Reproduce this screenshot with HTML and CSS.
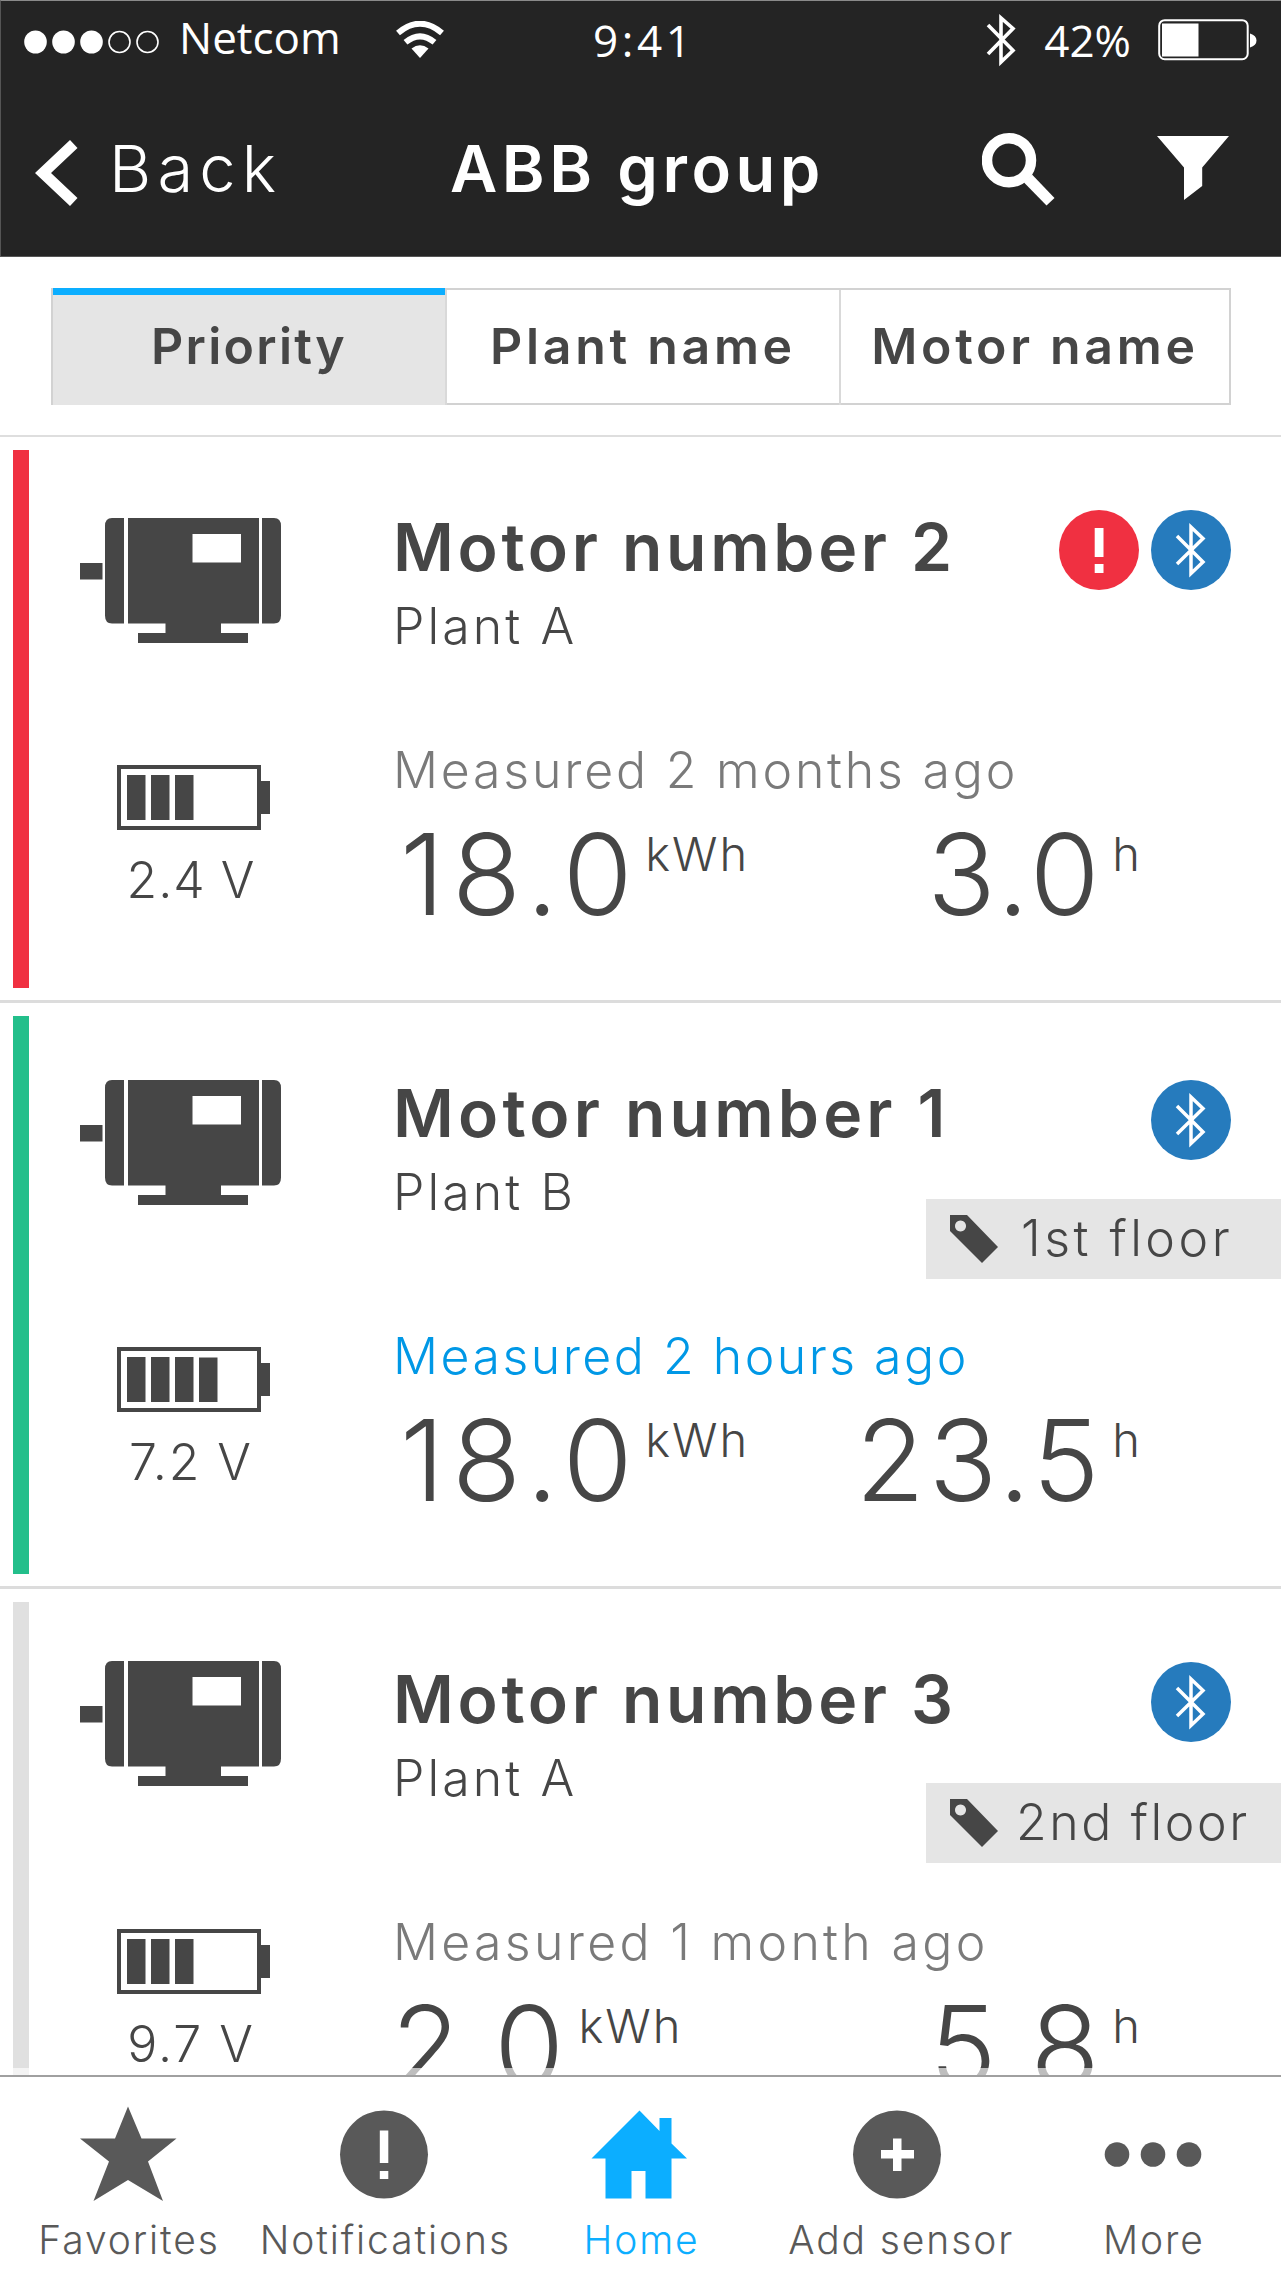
FILE: index.html
```
<!DOCTYPE html>
<html lang="en">
<head>
<meta charset="utf-8">
<title>ABB group</title>
<link rel="stylesheet" href="styles.css">
</head>
<body>
<svg class="sprite" aria-hidden="true">
  <symbol id="motor" viewBox="0 0 201 125">
    <path d="M0 45h22.500v16.500H0zM44 0v105.500H32q-7 0-7-8V8q0-8 7-8zM48 0h131v105.500H141V115h27v10H58v-10h27.500v-9.500H48zM112.500 16v28.500H161V16zM182 0h12q7 0 7 8v89.500q0 8-7 8h-12z" fill="#464646" fill-rule="evenodd"/>
  </symbol>
  <symbol id="cell" viewBox="0 0 153 65">
    <path d="M0 0h144v16h9v33h-9v16H0zM4 4v57h136V4z" fill="#464646" fill-rule="evenodd"/>
    <path d="M10 10h18.500v45H10zM34 10h18.500v45H34zM58 10h18.500v45H58z" fill="#464646"/>
  </symbol>
  <symbol id="bluetooth" viewBox="0 0 80 80">
    <circle cx="40" cy="40" r="40" fill="#267bbd"/>
    <path d="M26 26L52 52 40 63.500V17L52 28.500 26 54" fill="none" stroke="#fff" stroke-width="3.500"/>
  </symbol>
  <symbol id="tag" viewBox="0 0 48 48">
    <path d="M0 0h17l31 32-16 16L0 16zM10.500 5.500a5.500 5.500 0 1 0 .01 0z" fill="#464646" fill-rule="evenodd"/>
  </symbol>
</svg>

<header class="header">
  <div class="status">
    <div class="status-left">
      <svg class="signal" viewBox="0 0 135 24"><g fill="#fff"><ellipse cx="11.500" cy="12" rx="11.300" ry="11.500"/><ellipse cx="39.500" cy="12" rx="11.300" ry="11.500"/><ellipse cx="67.500" cy="12" rx="11.300" ry="11.500"/></g><g fill="none" stroke="#fff" stroke-width="1.600"><circle cx="95.500" cy="12" r="10.500"/><circle cx="123.500" cy="12" r="10.500"/></g></svg>
      <span class="carrier">Netcom</span>
      <svg class="wifi" viewBox="0 0 48 38"><path d="M24 37l-8.500-9.500q8.500-6.500 17 0z" fill="#fff"/><g fill="none" stroke="#fff"><path d="M9.500 21.300q14.500-12 29 0" stroke-width="6"/><path d="M2 12q22-18.500 44 0" stroke-width="6"/></g></svg>
    </div>
    <span class="clock">9:41</span>
    <div class="status-right">
      <svg class="bt" viewBox="0 0 30 54"><path d="M2 12L27 37.500 15 49V5L27 15.500 2 41" fill="none" stroke="#fff" stroke-width="3.600"/></svg>
      <span>42%</span>
      <svg class="power" viewBox="0 0 100 42"><rect x="1.200" y="1.200" width="88.500" height="39" rx="5.500" fill="none" stroke="#fff" stroke-width="2"/><path d="M4 4.500h36.500v33H4zM92 14.500q6.500 2 6.500 7t-6.500 7z" fill="#fff"/></svg>
    </div>
  </div>
  <nav class="nav">
    <a class="back"><svg viewBox="0 0 43 66"><path d="M35 0l7.500 8-26.500 25 26.500 25-7.500 8L0 33z" fill="#fff"/></svg>Back</a>
    <h1 class="title">ABB group</h1>
    <div class="nav-icons">
      <svg class="search" viewBox="0 0 73 73"><circle cx="27" cy="27.300" r="22" fill="none" stroke="#fff" stroke-width="10.500"/><path d="M42 49.500l8-8L72.500 65l-8 7.500z" fill="#fff"/></svg>
      <svg class="filter" viewBox="0 0 72 64"><path d="M0 0h72L45.200 31.500V50L27 64V31.500z" fill="#fff"/></svg>
    </div>
  </nav>
</header>

<div class="tabs">
  <div class="tab tab-active">Priority</div>
  <div class="tab">Plant name</div>
  <div class="tab">Motor name</div>
</div>

<main class="list">
  <article class="card">
    <div class="bar bar-red"></div>
    <div class="side">
      <svg class="motor motor-low"><use href="#motor"/></svg>
      <svg class="cell" viewBox="0 0 153 65"><use href="#cell"/></svg>
      <span class="volts">2.4 V</span>
    </div>
    <div class="main">
      <div class="head head-short">
        <div class="heading"><h2 class="name">Motor number 2</h2><p class="plant">Plant A</p></div>
        <div class="aside aside-high"><div class="badges">
          <svg viewBox="0 0 80 80"><circle cx="40" cy="40" r="40" fill="#f03041"/><path d="M35.700 18h8.800v29h-8.800zM35.700 54h8.800v9h-8.800z" fill="#fff"/></svg>
          <svg><use href="#bluetooth"/></svg>
        </div></div>
      </div>
      <p class="measured">Measured 2 months ago</p>
      <div class="values">
        <div class="value"><span class="num num-wide">18.0</span><span class="unit">kWh</span></div>
        <div class="value"><span class="num">3.0</span><span class="unit">h</span></div>
      </div>
    </div>
  </article>

  <article class="card card-tall">
    <div class="bar bar-green"></div>
    <div class="side">
      <svg class="motor motor-mid"><use href="#motor"/></svg>
      <svg class="cell" viewBox="0 0 153 65"><use href="#cell"/><path d="M82 10.500h18.500V55H82z" fill="#464646"/></svg>
      <span class="volts volts-wide">7.2 V</span>
    </div>
    <div class="main">
      <div class="head">
        <div class="heading"><h2 class="name name-wide">Motor number 1</h2><p class="plant">Plant B</p></div>
        <div class="aside">
          <div class="badges"><svg><use href="#bluetooth"/></svg></div>
          <div class="tag"><svg><use href="#tag"/></svg><span>1st floor</span></div>
        </div>
      </div>
      <p class="measured measured-new">Measured 2 hours ago</p>
      <div class="values">
        <div class="value"><span class="num num-wide">18.0</span><span class="unit">kWh</span></div>
        <div class="value"><span class="num">23.5</span><span class="unit">h</span></div>
      </div>
    </div>
  </article>

  <article class="card card-tall">
    <div class="bar bar-grey"></div>
    <div class="side">
      <svg class="motor"><use href="#motor"/></svg>
      <svg class="cell" viewBox="0 0 153 65"><use href="#cell"/></svg>
      <span class="volts volts-wide">9.7 V</span>
    </div>
    <div class="main">
      <div class="head">
        <div class="heading"><h2 class="name">Motor number 3</h2><p class="plant">Plant A</p></div>
        <div class="aside aside-high">
          <div class="badges"><svg><use href="#bluetooth"/></svg></div>
          <div class="tag"><svg><use href="#tag"/></svg><span class="tag-tight">2nd floor</span></div>
        </div>
      </div>
      <p class="measured measured-wide">Measured 1 month ago</p>
      <div class="values">
        <div class="value"><span class="num num-tight">2.0</span><span class="unit">kWh</span></div>
        <div class="value"><span class="num">5.8</span><span class="unit">h</span></div>
      </div>
    </div>
  </article>
</main>

<footer class="tabbar">
  <a><svg viewBox="0 0 100 100"><path d="M50 2.500l13.500 32h35L70 57.500 85 97 50 76 15.500 97 31 57.500 2 34.500h35z"/></svg><span>Favorites</span></a>
  <a><svg viewBox="0 0 100 100"><circle cx="50" cy="50.500" r="44"/><path class="cut" d="M45.800 26.500h8.500V59h-8.500zM45.800 67h8.500v8h-8.500z"/></svg><span>Notifications</span></a>
  <a class="current"><svg viewBox="0 0 100 100"><path d="M49.500 6.500l20 20.500V14h12v25.500L97 54.500H81.500v40h-26V67h-14v27.500h-26v-40h-14z"/></svg><span>Home</span></a>
  <a><svg viewBox="0 0 100 100"><circle cx="50" cy="50.500" r="44"/><path class="cut" d="M46 34.500h8.500V46H67v8.500H54.500V67H46V54.500H34V46h12z"/></svg><span class="label-shift">Add sensor</span></a>
  <a><svg viewBox="0 0 100 100"><circle cx="14" cy="50.500" r="12.300"/><circle cx="50" cy="50.500" r="12.300"/><circle cx="86" cy="50.500" r="12.300"/></svg><span>More</span></a>
</footer>
</body>
</html>
```

FILE: styles.css
```
* { box-sizing: border-box; }

body {
  margin: 0;
  height: 2273px;
  overflow: hidden;
  display: flex;
  flex-direction: column;
  background: #fff;
  color: #464646;
  font-family: "Inter", sans-serif;
  font-weight: 300;
}

h1, h2, p { margin: 0; }
svg { display: block; flex: none; }
.sprite { width: 0; height: 0; position: absolute; }

/* Header */
.header {
  height: 257px;
  flex: none;
  padding-top: 9px;
  background: #242424;
  border: 1px solid #555;
  border-top-color: #8a8a8a;
  border-right: 0;
  color: #fff;
}

.status {
  display: grid;
  grid-template-columns: 592px 1fr auto;
  height: 60px;
  padding-right: 23px;
  font: 400 44px/60px "Open Sans", sans-serif;
}

.status-left, .status-right { display: flex; align-items: center; }
.status-left { padding-left: 23px; }
.signal { width: 135px; height: 24px; margin-top: 4px; }
.carrier { margin: -6px 55px 0 20px; }
.wifi { width: 48px; height: 38px; }
.clock { letter-spacing: 3.6px; }
.bt { width: 30px; height: 54px; margin-right: 28px; }
.power { width: 100px; height: 42px; margin: 0 0 0 27px; }

.nav {
  display: grid;
  grid-template-columns: 449px 1fr auto;
  height: 80px;
  margin-top: 59px;
  padding-right: 52px;
  line-height: 80px;
  font-size: 65px;
}

.back {
  display: flex;
  align-items: center;
  gap: 31px;
  padding-left: 34px;
  letter-spacing: 6.2px;
}
.back svg { width: 43px; height: 66px; margin-top: 8px; }
.title { font-size: 65px; font-weight: 600; letter-spacing: 4.5px; }
.nav-icons { display: flex; gap: 102px; }
.search { width: 73px; height: 73px; margin-top: 4px; }
.filter { width: 72px; height: 64px; margin-top: 7px; }

/* Sort tabs */
.tabs {
  display: grid;
  grid-template-columns: 392px 394px 1fr;
  flex: none;
  height: 117px;
  margin: 31px 50px 30px 51px;
  border: 2px solid #d2d2d2;
}

.tab {
  line-height: 113px;
  text-align: center;
  font-size: 50px;
  font-weight: 600;
  letter-spacing: 3.7px;
}
.tab + .tab { border-left: 2px solid #d9d9d9; }
.tab-active {
  margin-top: -2px;
  background: #e5e5e5;
  box-shadow: inset 0 7px #0caeff;
  line-height: 117px;
  letter-spacing: 2.3px;
}

/* Motor list */
.list {
  position: relative;
  flex: 1;
  min-height: 0;
  overflow: hidden;
  border-top: 2px solid #dedede;
}
.list::after {
  content: "";
  position: absolute;
  inset: auto 0 0;
  height: 7px;
  background: rgba(255, 255, 255, .65);
}

.card {
  display: grid;
  grid-template-columns: 16px 352px minmax(0, 1fr);
  height: 566px;
  padding-left: 13px;
  border-bottom: 3px solid #dcdcdc;
}
.card-tall { height: 586px; }

.bar { margin: 13px 0 12px; }
.bar-red { background: #f03041; }
.bar-green { background: #23bf8b; }
.bar-grey { background: #e0e0e0; }

.side { display: flex; flex-direction: column; padding-left: 51px; }
.motor { width: 201px; height: 125px; margin: 72px 0 143px; }
.motor-mid { margin: 77px 0 142px; }
.motor-low { margin: 81px 0 122px; }
.cell { width: 153px; height: 65px; margin-left: 37px; }
.volts {
  width: 222px;
  margin-top: 20px;
  line-height: 60px;
  text-align: center;
  font-size: 50px;
  letter-spacing: 1px;
}
.volts-wide { letter-spacing: 1.9px; }

.main { padding: 75px 0 0 12px; }
.head { display: flex; height: 248px; }
.head-short { height: 228px; }
.heading { flex: 1; min-width: 0; }
.name {
  font-size: 66px;
  line-height: 70px;
  font-weight: 600;
  letter-spacing: 3.7px;
  white-space: nowrap;
}
.name-wide { letter-spacing: 4.2px; }
.plant {
  margin-top: 14px;
  font-size: 50px;
  line-height: 60px;
  letter-spacing: 3.1px;
}

.aside { display: flex; flex-direction: column; gap: 39px; padding-top: 2px; }
.aside-high { gap: 41px; padding-top: 0; margin-top: -2px; }
.badges { display: flex; justify-content: flex-end; gap: 12px; margin-right: 50px; }
.badges svg { width: 80px; height: 80px; }

.tag {
  display: flex;
  align-items: center;
  gap: 23px;
  width: 355px;
  height: 80px;
  padding-left: 24px;
  background: #e5e5e5;
  font-size: 50px;
  line-height: 78px;
  letter-spacing: 3.5px;
  white-space: nowrap;
}
.tag svg { width: 48px; height: 48px; }
.tag span { margin-top: -2px; }
.tag .tag-tight { margin-left: -5px; letter-spacing: 2.6px; }

.measured {
  font-size: 50px;
  line-height: 60px;
  letter-spacing: 2.8px;
  color: #7a7a7a;
}
.measured-new { color: #0098e6; letter-spacing: 2.5px; }
.measured-wide { letter-spacing: 3.3px; }

.values {
  display: flex;
  justify-content: space-between;
  margin-top: 14px;
  padding-right: 139px;
}
.value { display: flex; gap: 9px; }
.num { font-size: 113px; line-height: 120px; letter-spacing: 3.8px; }
.num-wide { margin: 0 -4px 0 7px; letter-spacing: 7.6px; }
.num-tight { margin: 0 3px 0 -2px; letter-spacing: 2.4px; }
.unit { margin-top: 10px; font-size: 47px; line-height: 60px; letter-spacing: 2px; }

/* Bottom tab bar */
.tabbar {
  display: grid;
  grid-template-columns: repeat(5, 1fr);
  flex: none;
  height: 198px;
  border-top: 2px solid #a0a0a0;
  background: #fff;
}
.tabbar a {
  display: flex;
  flex-direction: column;
  align-items: center;
  padding-top: 27px;
  color: #595959;
  font-size: 39px;
  line-height: 46px;
  letter-spacing: 1.9px;
}
.tabbar svg { width: 100px; height: 100px; margin-bottom: 13px; fill: currentColor; }
.tabbar span { padding-left: 2px; }
.tabbar .label-shift { padding-left: 9px; }
.tabbar .cut { fill: #fff; }
.tabbar .current { color: #0caeff; }
```
